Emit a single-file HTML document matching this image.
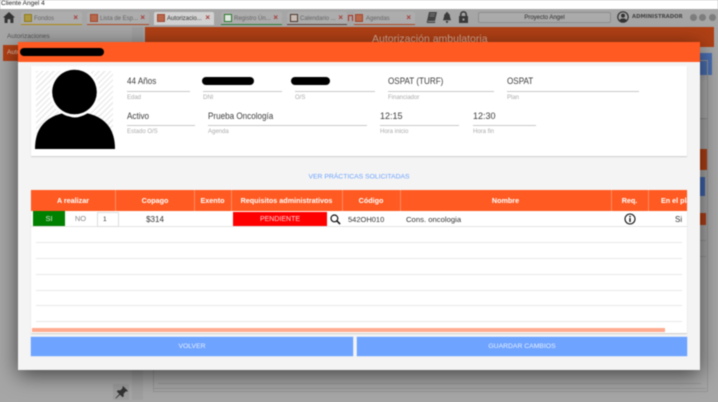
<!DOCTYPE html>
<html lang="es"><head><meta charset="utf-8"><title>Cliente Angel 4</title>
<style>
html,body{margin:0;padding:0;width:718px;height:402px;overflow:hidden;background:#a6a6a6}
body{font-family:"Liberation Sans",sans-serif;color:#333}
#w{position:relative;width:718px;height:402px;overflow:hidden;background:#a6a6a6;filter:blur(.4px)}
#w div,#w span,#w svg{position:absolute}
.t{white-space:nowrap;line-height:1}
.tab{top:12px;height:13px;background:#adadad;border-radius:2px 2px 0 0}
.tab .b{left:0;right:0;bottom:0;height:1px}
.tab .ic{left:2.5px;top:2px;width:6px;height:6px;border:1px solid #777;background:#b08a70}
.tab .n{left:13px;top:4px;font-size:6px;color:#666}
.tab .x{right:4px;top:1.5px;font-size:8px;font-weight:bold;color:#a83a3a;line-height:1}
.v{font-size:9px;color:#3c3c3c;transform:scaleX(.9);transform-origin:0 0}
.d{font-size:9px;color:#3c3c3c}
.l{font-size:6px;color:#aaa}
.u{height:1px;background:#c8c8c8}
.th{top:190px;height:21px;line-height:21px;text-align:center;color:#fff;font-size:7.2px;font-weight:bold;white-space:nowrap;overflow:hidden}
.sep{top:190px;width:1px;height:21px;background:#ff8a62}
.rl{left:36px;width:646px;height:1px;background:#e9e9e9}
.btn{top:337px;height:19px;line-height:20px;background:#6ea3ff;color:#e6efff;font-size:6.8px;text-align:center;box-shadow:0 0 0 .5px #b9d2ff}
</style></head><body>
<div id="w">
<!-- title bar -->
<div style="left:0;top:0;width:718px;height:9px;background:#fff"></div>
<div class="t" style="left:1px;top:.5px;font-size:6.5px;color:#222">Cliente Angel 4</div>
<!-- home -->
<svg style="left:3px;top:12px" width="12" height="11" viewBox="0 0 12 11"><path d="M6 0 0 5.500h1.600V11h3V7.300h2.800V11h3V5.500H12z" fill="#333"/></svg>
<!-- tabs -->
<div class="tab" style="left:21px;width:61px"><div class="ic" style="background:#b09a40;border-color:#8f7a20"></div><span class="n t">Fondos</span><span class="x">×</span><div class="b" style="background:#b08a10"></div></div>
<div class="tab" style="left:87px;width:62px"><div class="ic" style="background:#b9684c;border-color:#a04a30"></div><span class="n t">Lista de Esp...</span><span class="x">×</span><div class="b" style="background:#b04a25"></div></div>
<div class="tab" style="left:154px;width:60px;background:#d2d2d2"><div class="ic" style="background:#b9684c;border-color:#a04a30"></div><span class="n t" style="color:#333">Autorizacio...</span><span class="x">×</span></div>
<div class="tab" style="left:221px;width:61px"><div class="ic" style="background:#dfe8df;border-color:#2e7a2e"></div><span class="n t">Registro Ún...</span><span class="x">×</span><div class="b" style="background:#2e7d32"></div></div>
<div class="tab" style="left:287px;width:60px"><div class="ic" style="background:#c8bdb5;border-color:#4e3a30"></div><span class="n t">Calendario ...</span><span class="x">×</span><div class="b" style="background:#5d4035"></div></div>
<div style="left:348px;top:15px;width:3px;height:5px;border-top:1px solid #b03020;border-left:1px solid #b03020;border-right:1px solid #b03020"></div>
<div class="tab" style="left:354px;width:61px"><div class="ic" style="left:1px;background:#b9684c;border-color:#a04a30"></div><span class="n t" style="left:12px">Agendas</span><span class="x">×</span><div class="b" style="background:#b04a25"></div></div>
<!-- top icons -->
<svg style="left:426px;top:12px" width="11" height="11" viewBox="0 0 11 11"><path d="M3 0h8L9 9H1z M1 9q-1 2 1 2h7l.4-1.200H2.400" fill="#444"/><path d="M4 2h5M3.600 4h5" stroke="#888" stroke-width=".7"/></svg>
<svg style="left:443px;top:12px" width="8" height="11" viewBox="0 0 8 11"><path d="M4 0q1 0 1 1.100Q7 2 7 5l1 3.200H0L1 5q0-3 2-3.900Q3 0 4 0zM2.800 9h2.400Q5 11 4 11T2.800 9z" fill="#3a3a3a"/></svg>
<svg style="left:459px;top:11px" width="9" height="12" viewBox="0 0 9 12"><path d="M1 5V3.500a3.500 3.500 0 0 1 7 0V5h1v7H0V5zm1.600 0h3.800V3.500a1.900 1.900 0 0 0-3.800 0z" fill="#3a3a3a" fill-rule="evenodd"/><circle cx="4.500" cy="8.500" r="1.100" fill="#aaa"/></svg>
<div class="t" style="left:478px;top:12px;width:131px;height:9px;border:1px solid #8e8e8e;border-radius:2px;background:#ababab;text-align:center;font-size:6px;line-height:10px;color:#2e2e2e">Proyecto Angel</div>
<svg style="left:617px;top:11px" width="12" height="12" viewBox="0 0 12 12"><circle cx="6" cy="6" r="5.200" fill="none" stroke="#333" stroke-width="1.200"/><circle cx="6" cy="4.600" r="2" fill="#333"/><path d="M2.400 9.600Q3 7.400 6 7.400t3.600 2.200Q8 11.200 6 11.200T2.400 9.600z" fill="#333"/></svg>
<div class="t" style="left:632px;top:14.500px;font-size:5.300px;font-weight:bold;color:#444;font-family:'DejaVu Sans',sans-serif">ADMINISTRADOR</div>
<div style="left:689.500px;top:13.500px;width:7px;height:7px;border-radius:50%;background:#7d7d7d"></div>
<div style="left:699px;top:13.500px;width:7px;height:7px;border-radius:50%;background:#7d7d7d"></div>
<div style="left:708.500px;top:13.500px;width:7px;height:7px;border-radius:50%;background:#7d7d7d"></div>
<!-- background page -->
<div class="t" style="left:7px;top:34px;font-size:6.500px;color:#555">Autorizaciones</div>
<div style="left:3px;top:45px;width:20px;height:16px;background:#b04015"></div>
<div class="t" style="left:7px;top:50px;font-size:6.500px;color:#e6c6b8">Auto</div>
<div style="left:132px;top:27px;width:11px;height:373px;background:#9f9f9f"></div>
<div style="left:113px;top:384px;width:16px;height:16px;background:#9c9c9c"></div>
<svg style="left:115px;top:386px" width="13" height="13" viewBox="0 0 13 13"><path d="M8 0l5 5-1.200.6-.8-.3L8.600 7.700l.2 2.400-1.200 1.200L5 8.700 1 12.500l-.5-.5L4.300 8 1.700 5.400 2.900 4.200l2.400.2L7.700 2 7.400 1.200z" fill="#333"/></svg>
<div style="left:145px;top:27px;width:569px;height:20px;background:#b04015"></div>
<div class="t" style="left:372px;top:33.500px;font-size:10.500px;color:#d9ab95">Autorización ambulatoria</div>
<div style="left:700px;top:53px;width:12px;height:22px;background:#4a6fb2"></div>
<div style="left:690px;top:80px;width:17px;height:38px;background:#acacac;box-shadow:0 1px 1px #8f8f8f"></div>
<div style="left:700px;top:149px;width:7px;height:21px;background:#b04015"></div>
<div style="left:700px;top:177px;width:5px;height:19px;background:#3f64ac"></div>
<div style="left:700px;top:213px;width:6px;height:12px;background:#b04015"></div>
<div style="left:700px;top:240px;width:6px;height:1px;background:#959595"></div>
<div style="left:700px;top:256px;width:6px;height:1px;background:#959595"></div>
<div style="left:153px;top:60px;width:553px;height:330px;border:1px solid #959595"></div>
<div style="left:158px;top:383px;width:543px;height:1px;background:#959595"></div>
<div style="left:153px;top:388px;width:553px;height:1px;background:#959595"></div>
<!-- modal -->
<div style="left:18px;top:42px;width:682px;height:328px;background:#f4f4f4;box-shadow:0 5px 20px rgba(0,0,0,.6)"></div>
<div style="left:18px;top:42px;width:682px;height:20px;background:#ff5a21"></div>
<div style="left:20px;top:48px;width:84px;height:8px;border-radius:4px;background:#000"></div>
<!-- card -->
<div style="left:31px;top:66px;width:656px;height:90px;background:#fff;box-shadow:0 1px 1px #ccc"></div>
<div style="left:36px;top:71px;width:77px;height:78px;background:repeating-linear-gradient(135deg,#ececec 0 1.500px,#fff 1.500px 4px)"></div>
<svg style="left:34px;top:69px" width="82" height="81" viewBox="0 0 82 81"><path d="M1 80Q1 50 30 44Q41 53 52 44Q81 50 81 80z" fill="#000"/><circle cx="40.500" cy="23" r="25" fill="#fff"/><circle cx="40.500" cy="23" r="22.300" fill="#000"/></svg>
<div class="t v" style="left:127px;top:77px">44 Años</div><div class="u" style="left:127px;top:91px;width:63px"></div><div class="t l" style="left:127px;top:94.500px">Edad</div>
<div style="left:202px;top:77px;width:52px;height:8px;border-radius:4px;background:#000"></div><div class="u" style="left:203px;top:91px;width:79px"></div><div class="t l" style="left:203px;top:94.500px">DNI</div>
<div style="left:291px;top:77px;width:39px;height:8px;border-radius:4px;background:#000"></div><div class="u" style="left:295px;top:91px;width:80px"></div><div class="t l" style="left:295px;top:94.500px">O/S</div>
<div class="t v" style="left:388px;top:77px">OSPAT (TURF)</div><div class="u" style="left:388px;top:91px;width:106px"></div><div class="t l" style="left:388px;top:94.500px">Financiador</div>
<div class="t v" style="left:507px;top:77px">OSPAT</div><div class="u" style="left:507px;top:91px;width:132px"></div><div class="t l" style="left:507px;top:94.500px">Plan</div>
<div class="t v" style="left:127px;top:111.500px">Activo</div><div class="u" style="left:127px;top:125px;width:68px"></div><div class="t l" style="left:127px;top:129px">Estado O/S</div>
<div class="t v" style="left:208px;top:111.500px">Prueba Oncología</div><div class="u" style="left:208px;top:125px;width:159px"></div><div class="t l" style="left:208px;top:129px">Agenda</div>
<div class="t d" style="left:380px;top:111.500px">12:15</div><div class="u" style="left:380px;top:125px;width:79px"></div><div class="t l" style="left:380px;top:129px">Hora inicio</div>
<div class="t d" style="left:473px;top:111.500px">12:30</div><div class="u" style="left:473px;top:125px;width:63px"></div><div class="t l" style="left:473px;top:129px">Hora fin</div>
<div class="t" style="left:0;width:718px;top:173px;line-height:7px;padding-top:0;text-align:center;font-size:6.800px;color:#6ea3ff;transform:translateY(.5px)">VER PRÁCTICAS SOLICITADAS</div>
<!-- table -->
<div style="left:31px;top:190px;width:656px;height:143px;background:#fff;box-shadow:0 1px 1px #ccc"></div>
<div style="left:31px;top:190px;width:656px;height:21px;background:#ff5a21"></div>
<div class="th" style="left:31px;width:84px">A realizar</div>
<div class="th" style="left:116px;width:78px">Copago</div>
<div class="th" style="left:194px;width:37px">Exento</div>
<div class="th" style="left:231px;width:111px">Requisitos administrativos</div>
<div class="th" style="left:342px;width:58px">Código</div>
<div class="th" style="left:400px;width:211px">Nombre</div>
<div class="th" style="left:611px;width:37px">Req.</div>
<div class="th" style="left:661px;width:26px;text-align:left">En el plan</div>
<div class="sep" style="left:115px"></div><div class="sep" style="left:194px"></div><div class="sep" style="left:231px"></div><div class="sep" style="left:342px"></div><div class="sep" style="left:400px"></div><div class="sep" style="left:611px"></div><div class="sep" style="left:648px"></div>
<div style="left:31px;top:226px;width:656px;height:1px;background:#e4e4e4"></div>
<div class="t" style="left:33px;top:211px;width:32px;height:15px;line-height:16px;background:#008000;color:#d9ecd9;font-size:7.500px;text-align:center">SI</div>
<div class="t" style="left:65px;top:211px;width:31px;height:15px;line-height:16px;color:#888;font-size:7.500px;text-align:center">NO</div>
<div class="t" style="left:97px;top:212px;width:20px;height:13px;line-height:14px;border:1px solid #ddd;font-size:6.500px;text-indent:5px;background:#fff">1</div>
<div class="t" style="left:116px;top:216px;width:78px;text-align:center;font-size:8px">$314</div>
<div class="t" style="left:233px;top:212px;width:94px;height:14px;line-height:15px;background:#f00;color:#ffd6d6;font-size:7px;text-align:center">PENDIENTE</div>
<svg style="left:329.500px;top:213.500px" width="11" height="11" viewBox="0 0 12 12"><circle cx="4.800" cy="4.800" r="3.700" fill="none" stroke="#111" stroke-width="1.300"/><path d="M7.500 7.500 11 11" stroke="#111" stroke-width="1.700"/></svg>
<div class="t" style="left:348px;top:216px;font-size:7.500px">542OH010</div>
<div class="t" style="left:406px;top:216px;font-size:7.700px">Cons. oncologia</div>
<svg style="left:624px;top:213px" width="12" height="12" viewBox="0 0 12 12"><circle cx="6" cy="6" r="5" fill="none" stroke="#111" stroke-width="1.100"/><rect x="5.300" y="5" width="1.400" height="4" fill="#111"/><rect x="5.300" y="2.800" width="1.400" height="1.400" fill="#111"/></svg>
<div class="t" style="left:675px;top:216px;font-size:8px">Si</div>
<div class="rl" style="top:242px"></div><div class="rl" style="top:258px"></div><div class="rl" style="top:274px"></div><div class="rl" style="top:290px"></div><div class="rl" style="top:305px"></div><div class="rl" style="top:321px"></div>
<div style="left:32px;top:328px;width:633px;height:4px;background:#ffab8f"></div>
<!-- buttons -->
<div class="btn t" style="left:31px;width:322px">VOLVER</div>
<div class="btn t" style="left:357px;width:330px">GUARDAR CAMBIOS</div>
</div>
</body></html>
